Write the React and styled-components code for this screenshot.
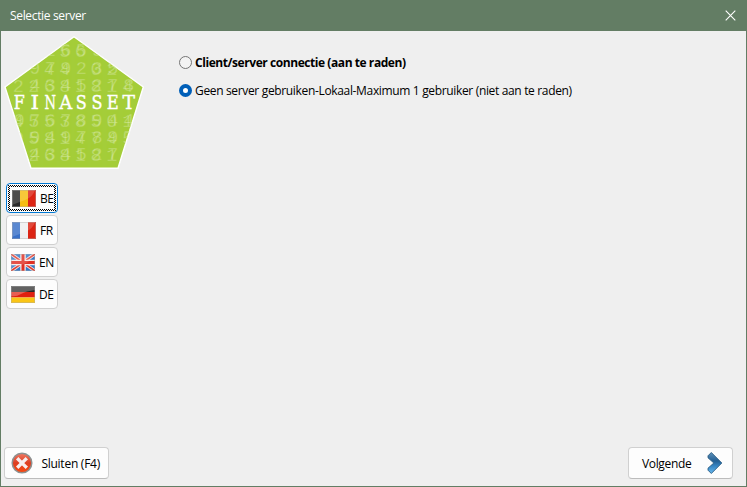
import React from 'react';
import styled, { createGlobalStyle } from 'styled-components';

const GlobalStyle = createGlobalStyle`
  * { box-sizing: border-box; }
  body { margin: 0; background: #efefef; }
`;

const Window = styled.div`
  width: 747px;
  height: 487px;
  display: flex;
  flex-direction: column;
  border: 1px solid #637d64;
  border-top: 0;
  background: #efefef;
  color: #000;
  font: 12px/16px 'Open Sans', 'Noto Sans', sans-serif;
  overflow: hidden;
`;

const TitleBar = styled.header`
  flex: 0 0 31px;
  display: flex;
  align-items: center;
  justify-content: space-between;
  padding: 0 10px 0 9px;
  background: #637d64;
  color: #fff;
`;

const CloseButton = styled.button`
  display: flex;
  padding: 0;
  border: 0;
  background: none;
`;

const Label = styled.span`
  white-space: nowrap;
  font-weight: ${(p) => (p.$bold ? 700 : 400)};
  letter-spacing: ${(p) => p.$spacing || 0}px;
`;

const Content = styled.main`
  flex: 1;
  display: flex;
`;

const Sidebar = styled.aside`
  width: 178px;
  display: flex;
  flex-direction: column;
`;

const Logo = styled.svg`
  display: block;
  margin: 4px 0 0 3px;
`;

const LanguageList = styled.nav`
  display: flex;
  flex-direction: column;
  gap: 2px;
  margin: 12px 0 0 5px;
`;

const Button = styled.button`
  display: flex;
  align-items: center;
  padding: 0;
  border: 1px solid #d0d0d0;
  border-bottom-color: #bcbcbc;
  border-radius: 4px;
  background: #fdfdfd;
  color: #000;
  font: inherit;

  ${Label} {
    padding-top: 2px;
  }
`;

const LanguageButton = styled(Button)`
  position: relative;
  width: 52px;
  height: 30px;
  padding-left: ${(p) => (p.$shift ? 4 : 5)}px;
  gap: 4px;
  border-color: ${(p) => (p.$focused ? '#0078d4' : '#d0d0d0')};
`;

const FocusRing = styled.svg`
  position: absolute;
  left: 1px;
  top: 1px;
`;

const Options = styled.section`
  display: flex;
  flex-direction: column;
  gap: 12px;
  padding-top: 24px;
`;

const Option = styled.label`
  display: flex;
  align-items: center;
  gap: 3px;
  height: 16px;
`;

const Radio = styled.span`
  width: 13px;
  height: 13px;
  margin-top: -1px;
  border-radius: 50%;
  border: ${(p) => (p.$checked ? '4px solid #005fb8' : '1px solid #757575')};
  background: ${(p) => (p.$checked ? '#fff' : '#f3f3f3')};
`;

const Footer = styled.footer`
  display: flex;
  justify-content: space-between;
  padding: 0 13px 7px 3px;
`;

const ActionButton = styled(Button)`
  width: 105px;
  height: 32px;
  padding: ${(p) => p.$pad};
  justify-content: space-between;
`;

const COLUMNS = [15, 30.5, 46, 61.5, 77, 92.7, 108.5, 124.5];

const DIGIT_ROWS = [
  { y: 20.5, back: '   56   ', front: '  2659  ' },
  { y: 38.5, back: '  44 02 ', front: ' 9792350' },
  { y: 56, back: '22681814', front: ' 4345278' },
  { y: 91, back: '45538501', front: '97678944' },
  { y: 107.5, back: '05814745', front: ' 9497897' },
  { y: 125, back: ' 268181 ', front: ' 434527 ' },
];

const NAME_WIDTHS = [11, 8.5, 11.5, 13, 11, 11, 12, 12.5];

function FinassetLogo() {
  return (
    <Logo width="142" height="136" viewBox="0 0 142 136">
      <defs>
        <clipPath id="pentagon"><path d="M70 2 139 52 114 133H27L1 52Z" /></clipPath>
      </defs>
      <path d="M70 1.8 139.3 52 114 133.3H27L1 52Z" fill="#a4cd39" stroke="#fff" strokeWidth="1.4" />
      <g clipPath="url(#pentagon)" fill="#e0efb6" stroke="#a4cd39" strokeWidth=".3" fontFamily="'Liberation Mono', monospace" fontSize="18.5" textAnchor="middle">
        {DIGIT_ROWS.map((row) => COLUMNS.map((x, i) => (
          <React.Fragment key={`${row.y}-${x}`}>
            {row.back[i] !== ' ' && <text x={x - 0.6} y={row.y + 1} opacity=".46">{row.back[i]}</text>}
            {row.front[i] !== ' ' && <text x={x + 0.4} y={row.y} opacity=".46">{row.front[i]}</text>}
          </React.Fragment>
        )))}
      </g>
      <g fill="#fff" stroke="#fff" strokeWidth=".35" fontFamily="'DejaVu Serif', serif" fontSize="17.8">
        {[...'FINASSET'].map((letter, i) => (
          <text key={i} x={COLUMNS[i] - NAME_WIDTHS[i] / 2 + 0.3} y="74" textLength={NAME_WIDTHS[i]} lengthAdjust="spacingAndGlyphs">{letter}</text>
        ))}
      </g>
    </Logo>
  );
}

function Flag({ code }) {
  return (
    <svg width="24" height="17" viewBox="0 0 24 17">
      {code === 'BE' && <><path fill="#292929" d="M0 0h8v17H0z" /><path fill="#f6bd12" d="M8 0h8v17H8z" /><path fill="#dc2414" d="M16 0h8v17h-8z" /></>}
      {code === 'FR' && <><path fill="#3970c8" d="M0 0h8v17H0z" /><path fill="#eeeef0" d="M8 0h8v17H8z" /><path fill="#dc2414" d="M16 0h8v17h-8z" /></>}
      {code === 'DE' && <><path fill="#252525" d="M0 0h24v6H0z" /><path fill="#df2010" d="M0 6h24v5.5H0z" /><path fill="#fac516" d="M0 11.5h24V17H0z" /></>}
      {code === 'EN' && <>
        <path fill="#3279c8" d="M0 0h24v17H0z" />
        <path stroke="#f3dddd" strokeWidth="3.4" d="m0 0 24 17M24 0 0 17" />
        <path stroke="#df3c30" strokeWidth="1.5" d="m0 0 24 17M24 0 0 17" />
        <path stroke="#f7e8e5" strokeWidth="5.5" d="M12 0v17M0 8.5h24" />
        <path stroke="#df3025" strokeWidth="3" d="M12 0v17M0 8.5h24" />
      </>}
      <path d={code === 'DE' ? 'M0 0H24V4Q15 5 10 8T0 10Z' : 'M0 0H23Q21 7 13 10T0 15Z'} fill="#fff" opacity={code === 'DE' ? 0.28 : 0.17} />
      <path d="M.5.5h23v16H.5z" fill="none" stroke="#aaa" strokeOpacity=".4" />
    </svg>
  );
}

function DottedFocus() {
  return (
    <FocusRing width="48" height="26">
      <defs>
        <pattern id="dots" width="2" height="2" patternUnits="userSpaceOnUse" shapeRendering="crispEdges">
          <path d="M0 0h1v1H0zM1 1h1v1H1z" />
        </pattern>
      </defs>
      <path d="M0 0H48V26H0ZM2 2V24H46V2Z" fillRule="evenodd" fill="url(#dots)" />
    </FocusRing>
  );
}

function CancelIcon() {
  return (
    <svg width="22" height="22" viewBox="0 0 22 22">
      <defs>
        <linearGradient id="red" x2="0" y2="1"><stop stopColor="#ef7965" /><stop offset=".5" stopColor="#dd3e21" /><stop offset="1" stopColor="#fa4a10" /></linearGradient>
      </defs>
      <circle cx="11" cy="11" r="9.8" fill="url(#red)" stroke="#8d9191" strokeWidth="1.5" />
      <path d="m7.4 7.4 7.2 7.2m0-7.2-7.2 7.2" stroke="#f8eeee" strokeWidth="3.4" strokeLinecap="square" />
    </svg>
  );
}

function NextIcon() {
  return (
    <svg width="16" height="24" viewBox="0 0 16 24">
      <defs>
        <linearGradient id="blue" x2="0" y2="1"><stop stopColor="#5e91b9" /><stop offset=".4" stopColor="#235f94" /><stop offset=".65" stopColor="#3686c4" /><stop offset="1" stopColor="#69b9ef" /></linearGradient>
      </defs>
      <path d="M4.3 1.5 14.8 12 4.3 22.5 1 19.2V17.2L6.8 12 1 6.8V4.8Z" fill="url(#blue)" stroke="#285b83" strokeWidth=".9" />
    </svg>
  );
}

const LANGUAGES = ['BE', 'FR', 'EN', 'DE'];

export default function App() {
  return (
    <>
      <GlobalStyle />
      <Window>
        <TitleBar>
          <Label $spacing={-0.34}>Selectie server</Label>
          <CloseButton aria-label="Sluiten">
            <svg width="11" height="11" viewBox="0 0 11 11"><path d="m.7.7 9.6 9.6m0-9.6L.7 10.3" stroke="#fff" strokeWidth="1.1" /></svg>
          </CloseButton>
        </TitleBar>
        <Content>
          <Sidebar>
            <FinassetLogo />
            <LanguageList>
              {LANGUAGES.map((code, i) => (
                <LanguageButton key={code} $focused={i === 0} $shift={i > 1}>
                  <Flag code={code} />
                  <Label $spacing={-0.5}>{code}</Label>
                  {i === 0 && <DottedFocus />}
                </LanguageButton>
              ))}
            </LanguageList>
          </Sidebar>
          <Options>
            <Option><Radio /><Label $bold $spacing={-0.435}>Client/server connectie (aan te raden)</Label></Option>
            <Option><Radio $checked /><Label $spacing={-0.34}>Geen server gebruiken-Lokaal-Maximum 1 gebruiker (niet aan te raden)</Label></Option>
          </Options>
        </Content>
        <Footer>
          <ActionButton $pad="0 8px 0 6px"><CancelIcon /><Label $spacing={-0.25}>Sluiten (F4)</Label></ActionButton>
          <ActionButton $pad="0 9px 0 13px"><Label $spacing={-0.35}>Volgende</Label><NextIcon /></ActionButton>
        </Footer>
      </Window>
    </>
  );
}
